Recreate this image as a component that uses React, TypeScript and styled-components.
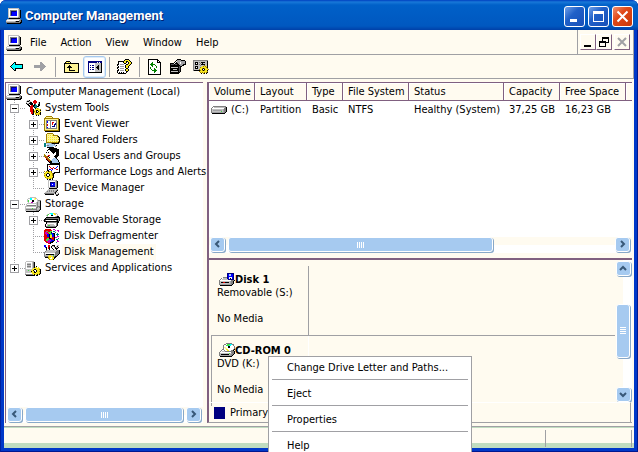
import React from "react";
import styled, { createGlobalStyle, css } from "styled-components";

const color = {
  cream: "#fffbf0",
  grey: "#a0a0a4",
  plum: "#806080",
  sky: "#a6caf0",
  mint: "#c0dcc0",
  frame: "#0038c8",
};

const GlobalStyle = createGlobalStyle`
  * { box-sizing: border-box; }
  body {
    margin: 0;
    overflow: hidden;
    font: 11px/16px "DejaVu Sans Condensed", "Liberation Sans", sans-serif;
    color: #000;
  }
  button { font: inherit; color: inherit; padding: 0; border: 0; background: none; }
  ul { list-style: none; margin: 0; padding: 0; }
`;

/* ---------- icons ---------- */

const palette: Record<string, string> = {
  k: "#000000", w: "#ffffff", g: "#808080", l: "#c0c0c0", b: "#0000ff",
  n: "#000080", y: "#f8e820", p: "#fff494", c: "#00ffff", t: "#008080",
  r: "#e00000", G: "#008000", o: "#a08000", m: "#c000c0", s: "#a6caf0",
  a: "#a0a0a4", d: "#505058", e: "#40e040",
};

const art = {
  computer: [
    "..lllllllllll...",
    "..lwwwwwwwwwlg..",
    "..lwgggggggwlgk.",
    "..lwgnnnnnbwlgk.",
    "..lwgnbbbbbwlgk.",
    "..lwgnbbbbbwlgk.",
    "..lwgnbbbbbwlgk.",
    "..lwgbbbbbbwlgk.",
    "..lwwwwwwwwwlgk.",
    "..llllllllllggk.",
    "...kkkkkkkkkkk..",
    ".lllllllllllllg.",
    "lwwwwwwwwwwwwggk",
    "lllllllllgkkkggk",
    "ggggggggggggggkk",
    ".kkkkkkkkkkkkkk.",
  ],
  back: [
    "....kk........",
    "...kck........",
    "..kcckkkkkkkk.",
    ".kcccccccccck.",
    "kccccccccccck.",
    ".kcccccccccck.",
    "..kcckkkkkkkk.",
    "...kck........",
    "....kk........",
  ],
  forward: [
    ".......aa.....",
    ".......aaa....",
    ".......aaaa...",
    ".aaaaaaaaaaa..",
    ".aaaaaaaaaaaa.",
    ".aaaaaaaaaaa..",
    ".......aaaa...",
    ".......aaa....",
    ".......aa.....",
  ],
  upFolder: [
    "..kkkk..........",
    ".kypypk.........",
    "kkkkkkkkkkkkkkk.",
    "kpppppppppppppk.",
    "kppppkppppppppk.",
    "kpppkkkpppppppk.",
    "kppkkkkkppppppk.",
    "kppppkppppppppk.",
    "kppppkppppppppk.",
    "kppppkkkkkkpppk.",
    "kpppppppppppppk.",
    "kkkkkkkkkkkkkkk.",
  ],
  treeToggle: [
    "nnnnnnnnnnnnnn",
    "nnnnnnnnnwnwnn",
    "nwwwwwwllllllk",
    "nwwwwwwllllllk",
    "nwnwnnwlllkllk",
    "nwwwwwwllkkllk",
    "nwnwnnwlkkkllk",
    "nwwwwwwllkkllk",
    "nwnwnnwlllkllk",
    "nwwwwwwllllllk",
    "nwwwwwwllllllk",
    "nkkkkkkkkkkkkk",
  ],
  helpDoc: [
    "........kkkk....",
    ".......kyyyyk...",
    ".kkkkkkyykkyyk..",
    ".kwwwwkyyk.kyyk.",
    ".kwwwwwkk..kyyk.",
    "kkwaaaawwkkyyk..",
    "kwwwwwwwkyyyk...",
    ".kwaaaawkyyk....",
    "kkwwwwwwkyyk....",
    "kwwaaaawwkk.....",
    ".kwwwwwwkyyk....",
    "kkwaaaawkyyk....",
    "kwwwwwwwwkk.....",
    "kwkwkwkwwk......",
    ".kkkkkkkk.......",
  ],
  refresh: [
    "kkkkkkkkkk...",
    "kwwwwwwwwkk..",
    "kwwwwwwwwkwk.",
    "kwwwGwwwwkkkk",
    "kwwGGwwwwwwwk",
    "kwGGGGGwwwwwk",
    "kwwGGwwGwwwwk",
    "kwwwGwwwGwwwk",
    "kwGwwwwwGwwwk",
    "kwGwwwGwwwwwk",
    "kwwGwwGGwwwwk",
    "kwwwGGGGGwwwk",
    "kwwwwwGGwwwwk",
    "kwwwwwGwwwwwk",
    "kwwwwwwwwwwwk",
    "kkkkkkkkkkkkk",
  ],
  properties: [
    ".......kkkk.....",
    "......kaaaakkkk.",
    ".....kwaaaaaaaak",
    "....kwkaaawaaaak",
    "kkkkwkkkaawaaaak",
    "kdddkddkkaaaakkk",
    "kkkkkkkkkkaakk..",
    "kkkkkkkkkdkk....",
    "klllllllkdk.....",
    "kkkkkkkkkdk.....",
    "kkkllllkkdk.....",
    "kkkkkkkkkdk.....",
    "klllllllkdk.....",
    "kkkkkkkkkk......",
    "kkkkkkkkk.......",
  ],
  settings: [
    "ggggggggggggggg.",
    "glllllllllllllk.",
    "glkkklglkkkkllk.",
    "glkwkllglkllllk.",
    "glkkklglkkkkllk.",
    "gllllllglllollk.",
    "glkkkllllyoyoyk.",
    "glkwklloyyyyyok.",
    "glkkkllyyokoyyo.",
    "gllllloyykwkyyyo",
    "gkkkkkkoyokoyyk.",
    "......oyyyyyyyo.",
    ".......oyoyoyok.",
    "........k.ok.k..",
  ],
  tools: [
    "..llk....rr.....",
    ".lkkll..rrrr....",
    ".l..lkk.rrrr.lk.",
    ".kllkkkk.rr..lk.",
    "..kk.kkk.kt..kk.",
    "...kk.rrkktt.kk.",
    "....krrrktttkk..",
    ".....rrrwktt....",
    ".....rrrwwkyoy..",
    ".....rrrkwyyyyyo",
    ".....rrrkyykkyyk",
    ".....rrrkoykwkyy",
    "......rrkyykkyyk",
    "......rrk.oyyyok",
    ".......kk.yoyoyk",
    "...........k.k..",
  ],
  eventViewer: [
    "..oooooo........",
    ".oppppppo.......",
    "ooooooooooooooo.",
    "opppppppppppppok",
    "opgggggggggggpok",
    "opgbwwgwwwwwgpok",
    "opgbwwgwrrwwgpok",
    "opgwwwgwrwwngpok",
    "opgrwwgwrwnngpok",
    "opgrwwgwwwnwgpok",
    "opgwwwgwnnnwgpok",
    "opgbwwgwwwwwgpok",
    "opgggggggggggpok",
    "opppppppppppppok",
    "oooooooooooooook",
    ".kkkkkkkkkkkkkkk",
  ],
  sharedFolder: [
    "...oooooo.......",
    "..oppppppo......",
    "..opypypyooooo..",
    "..oppppppppppok.",
    "..opypypypypypok",
    "..oppppppppppppk",
    "..opypypypypypok",
    "..oppppppppppppk",
    "..opypypypypypok",
    "..ooooooooooooko",
    "ttlssssgkkkkkkk.",
    "ttwsssssssg.....",
    "ttlggsssssssk...",
    "ttwsssssswwg....",
    "...kkkkkkk......",
  ],
  users: [
    ".....kkkkkkkk...",
    "....kkkkkkkkkkk.",
    "...kwwkkkkkkkkk.",
    "...wwwwkkkkkkkk.",
    "..kwkwwwkkkwkkk.",
    "...wwwwwwkwwkkk.",
    "o..wwwwwwwwwkkk.",
    "oo.wrrwwwwwkkkk.",
    "ooorkwwwwwkkkk..",
    ".roo.kwwwwwkk...",
    "..roowwwwsssk...",
    "..kroowwsssssk..",
    "...kroosssssssk.",
    "....krkkssssssk.",
    ".....kkksssssssk",
    "......kkkkkkkkkk",
  ],
  performance: [
    "...kkkkkkkkkkkkk",
    "...kwwwwwwwwwwwk",
    "...kwrwwwwwwwbwk",
    "...kwwrwwrwwbwwk",
    "...kwwwrrwrbwwwk",
    "...kwbbwbwwwrrwk",
    "...kkwwbwwwwwwwk",
    "o.oykoyowwwwwwwk",
    ".yyyyyyowwkkkkkk",
    "oyykkyyyokk.....",
    "yykwwkyyok......",
    "oykwwkyyok......",
    "yyykkyyyyk......",
    ".oyyyyyyok......",
    "..yoyyoyk.......",
    "...k.kk.k.......",
  ],
  device: [
    "....llllllllg...",
    "....lwwwwwwlgk..",
    "....lwnnnnnlgk..",
    "....lwnbbbblgk..",
    "....lwnbwbblgk..",
    "....lwnbbbblgk..",
    "....lwnnnnnlgk..",
    "....llllllllgk..",
    ".....kkkkkkkk...",
    "...wlllllllllg..",
    "..wllglglgllgk..",
    ".wlglglglglgk...",
    "wlllllllllgkll..",
    "gggggggggglkwwg.",
    ".kkkkkkkkk.lggk.",
    "............kk..",
  ],
  storage: [
    ".....llllll.....",
    "...llccwwpyl....",
    "..lwwccwwppwl...",
    "..lewwwkkwwwlggg",
    "..lewwwkkwwwlllk",
    "...lwwmmwwwlgllk",
    "..llllllllllgllk",
    ".lwwwwwwwwwlgllk",
    ".lggggggggglgllk",
    "llllllllllllgggk",
    "lwwwwwwwwwwgglgk",
    "lllllllelllglllk",
    "lgggggggggggllgk",
    "lllllllllllgggk.",
    ".kkkkkkkkkkkkk..",
  ],
  removable: [
    ".....lcccyyll...",
    "...lewwccwyywl..",
    "..lewwwkkwwwwl..",
    "...lwwwwwwwlgkk.",
    "..kkkkkkkkkkkkkk",
    ".kgggggggggggggk",
    "kkkkkkkkkkkkkkgk",
    "kgwwwwwwwwwwgkgk",
    "kkkkkkkkkkkkkkk.",
    "..kggggggggggkk.",
    "..kwwwwwwwwwgk..",
    ".kwlllllllwwgk..",
    ".kwleelllllwgk..",
    ".kggggggggggk...",
    "..kkkkkkkkkk....",
  ],
  defrag: [
    ".rrrrrr..mm.....",
    "rrrrrrrr...m.mm.",
    "rrggrree.tt...m.",
    "rmmreeek...t....",
    "rmmmreebbkk..t..",
    "rrmbbkeebbk.ttt.",
    "rrrbbkyybbk..t..",
    "rrrbbkyybbk..mm.",
    "rrrrrkyyrrkmm...",
    "rrreekkrrrk...t.",
    "rreeembbrrk.tt..",
    "rreemmmbbbk..m..",
    ".rrmmmbbkk...mm.",
    "..rrmmkkk...t...",
    "....rrk.........",
  ],
  diskManage: [
    "bb..rr..kkk..ll.",
    "bb..rr.kllk.lk..",
    ".bk.rk.k..lkllk.",
    "..k.rk..k..kkk..",
    "..k..k...k..k...",
    "..gllllllllllggk",
    ".gllllllllllgggk",
    "gllllllllllggggk",
    "gwwwwwwwwwwggggk",
    "glkkkkkkkklgggk.",
    "gllllyyllelggk..",
    "ggggyyyyyggkk...",
    ".kkkoyywyykk....",
    "....oywwyyk.....",
    ".....oyyyk......",
  ],
  services: [
    ".llllllll.......",
    "lwwwwwwlgk......",
    "lwllllwlgk......",
    "lwggggwlgk......",
    "lwllllwlgk......",
    "lwggggwlgk.k....",
    "lwllllwlgkyy.y..",
    "lwwwwwwlyyyyyyy.",
    "lllllllyykkyyyok",
    "lllellyykwwkyyyk",
    "llllllkyykwkyyok",
    "llllllyyykkyyyyk",
    "lwwwwwwyyyyyyyok",
    "ggggggggykyykyk.",
    ".kkkkkkkkk.kk...",
  ],
  volume: [
    "..ggggggggggggg.",
    ".gwlllllllllllgk",
    "gwwwwwwwwwwwwggk",
    "glllllllllllaggk",
    "glaaaaaaaaalaggk",
    "glllllllllelaggk",
    "gaaaaaaaaaaaagk.",
    ".kkkkkkkkkkkkk..",
  ],
  removableDisk: [
    "........nnnnnnn.",
    "........nbssbbn.",
    "........nbssbbn.",
    "........nbbbbbn.",
    "....ggggnbwwwbn.",
    "..gwllllnbwkwbn.",
    ".gwllllllnnnnnn.",
    "gwwwwwwwwwwwgggk",
    "gllllllllllaggk.",
    "glkkrrkkkklaggk.",
    "gllllllllllaggk.",
    "gaaaaaaaaaaagk..",
    ".kkkkkkkkkkkk...",
  ],
  cdrom: [
    ".......gggggg...",
    ".....ggweeeccgg.",
    "....gwweeeccwwg.",
    "....gwwwwkkwwwwg",
    "....gppwwkkwwwwg",
    "....gwppwwwwwwwg",
    "...ggwwyywwwwwgk",
    "..gwwgwwyywwggk.",
    ".gwlllgggggggggk",
    "gwwwwwwwwwwwgggk",
    "glllllllllelaggk",
    "glkkkkkkkklaggk.",
    "gaaaaaaaaaaagk..",
    ".kkkkkkkkkkkk...",
  ],
};

type ArtName = keyof typeof art;

function PixelIcon({ name }: { name: ArtName }) {
  const rows = art[name];
  const width = rows[0].length;
  const paths: Record<string, string> = {};
  rows.forEach((row, y) => {
    for (const match of row.matchAll(/([a-zA-Z])\1*/g)) {
      const key = match[1];
      paths[key] = (paths[key] ?? "") + `M${match.index} ${y}h${match[0].length}v1h-${match[0].length}z`;
    }
  });
  return (
    <IconSvg width={width} height={rows.length} viewBox={`0 0 ${width} ${rows.length}`} aria-hidden="true">
      {Object.entries(paths).map(([key, d]) => (
        <path key={key} d={d} fill={palette[key]} />
      ))}
    </IconSvg>
  );
}

const IconSvg = styled.svg`
  display: block;
  flex: none;
  shape-rendering: crispEdges;
`;

/* ---------- window frame ---------- */

const Window = styled.div`
  position: relative;
  display: flex;
  flex-direction: column;
  height: 100vh;
  overflow: hidden;
  background: ${color.frame};
  padding: 0 4px 4px;
  border-radius: 6px 6px 0 0;
  box-shadow: inset 1px 0 #0020a0, inset -1px -1px #001890;
`;

const TitleBar = styled.header`
  display: flex;
  align-items: center;
  gap: 3px;
  height: 30px;
  flex: none;
  margin: 0 -4px;
  padding: 2px 5px 0 6px;
  border-radius: 6px 6px 0 0;
  background: linear-gradient(#0040c0 0, #1878d8 2px, #0060c8 5px, #0058c0 26px, #0040a8 30px);
`;

const Title = styled.h1`
  flex: 1;
  margin: 0;
  font: bold 13px/18px Roboto, sans-serif;
  color: #fff;
  text-shadow: 1px 1px #002070;
`;

const CaptionButton = styled.button<{ $close?: boolean }>`
  width: 21px;
  height: 21px;
  display: grid;
  place-items: center;
  border: 1px solid #fff;
  border-radius: 3px;
  background: ${(p) =>
    p.$close
      ? "linear-gradient(135deg, #f09070, #e04818 40%, #c83808)"
      : "linear-gradient(135deg, #70a0e8, #2060c8 40%, #1850b8)"};
`;

const Client = styled.div`
  flex: 1;
  min-height: 0;
  display: flex;
  flex-direction: column;
  background: ${color.cream};
`;

const MenuRow = styled.div`
  display: flex;
  flex: none;
  height: 25px;
  border-bottom: 1px solid ${color.grey};
  border-right: 1px solid ${color.grey};
`;

const MenuBar = styled.nav`
  flex: 1;
  display: flex;
  align-items: center;
  padding: 2px 0 0 2px;
`;

const MenuButton = styled.button`
  padding: 0 7px;
  height: 20px;
  &:first-of-type { margin-left: 1px; }
`;

const MdiButtons = styled.div`
  display: flex;
  align-items: center;
  padding: 0 3px 0 2px;
  border-left: 1px solid ${color.grey};
`;

const MdiButton = styled.button<{ $apart?: boolean }>`
  width: 16px;
  height: 16px;
  display: grid;
  place-items: center;
  border: 1px solid;
  border-color: #fff ${color.plum} ${color.plum} #fff;
  margin-left: ${(p) => (p.$apart ? "2px" : "0")};
`;

const ToolBar = styled.div`
  display: flex;
  flex: none;
  align-items: center;
  height: 24px;
  padding-left: 1px;
  border-bottom: 1px solid ${color.grey};
  border-right: 1px solid ${color.grey};
`;

const ToolButton = styled.button<{ $pressed?: boolean }>`
  display: grid;
  place-items: center;
  width: 23px;
  height: 22px;
  ${(p) =>
    p.$pressed &&
    css`
      border: 1px solid ${color.sky};
      border-radius: 3px;
      background: #fff;
      box-shadow: inset 0 0 0 1px #e0ecf8;
    `}
`;

const Divider = styled.span<{ $tight?: boolean }>`
  width: 1px;
  height: 20px;
  margin: 0 ${(p) => (p.$tight ? "3px" : "4px")};
  background: ${color.grey};
`;

const Workspace = styled.main`
  flex: 1;
  min-height: 0;
  display: grid;
  grid-template-columns: 198px minmax(0, 1fr);
  gap: 4px;
  padding: 3px 2px 3px 1px;
`;

/* ---------- scroll bars ---------- */

const skyBlock = css`
  background: ${color.sky};
  border: 1px solid #fff;
  border-radius: 3px;
  box-shadow: 1px 1px #88a8c8;
`;

const HBar = styled.div`
  display: flex;
  flex: none;
  height: 16px;
  gap: 3px;
  padding: 0 2px 1px 1px;
  background: linear-gradient(${color.cream} 50%, #fff 50%);
`;

const VBar = styled.div`
  display: flex;
  flex-direction: column;
  width: 17px;
  padding: 1px 2px 0 1px;
  background: linear-gradient(90deg, ${color.cream} 50%, #fff 50%);
`;

const ArrowButton = styled.button`
  ${skyBlock}
  flex: none;
  width: 15px;
  height: 15px;
  display: grid;
  place-items: center;
`;

const HTrack = styled.div<{ $size: string }>`
  flex: 1;
  display: grid;
  grid-template-columns: ${(p) => p.$size};
`;

const VTrack = styled.div`
  flex: 1;
  display: grid;
  grid-template-rows: 28fr 53fr 29fr;
`;

const Thumb = styled.div<{ $vertical?: boolean }>`
  ${skyBlock}
  ${(p) => p.$vertical && "grid-row: 2;"}
  display: grid;
  place-items: center;
`;

const Grip = styled.span<{ $vertical?: boolean }>`
  width: ${(p) => (p.$vertical ? "6px" : "7px")};
  height: ${(p) => (p.$vertical ? "7px" : "6px")};
  background: repeating-linear-gradient(${(p) => (p.$vertical ? "180deg" : "90deg")}, #fff 0 1px, transparent 1px 2px);
`;

const arrows = {
  left: "M6 1L3 4L6 7",
  right: "M3 1L6 4L3 7",
  up: "M1 6L4 3L7 6",
  down: "M1 3L4 6L7 3",
};

function Arrow({ to }: { to: keyof typeof arrows }) {
  return (
    <ArrowButton aria-label={`Scroll ${to}`}>
      <svg width="9" height="9" viewBox="0 0 9 9">
        <path d={arrows[to]} fill="none" stroke="#385878" strokeWidth="2" />
      </svg>
    </ArrowButton>
  );
}

function HorizontalScroll({ size }: { size: string }) {
  return (
    <HBar>
      <Arrow to="left" />
      <HTrack $size={size}>
        <Thumb><Grip /></Thumb>
      </HTrack>
      <Arrow to="right" />
    </HBar>
  );
}

/* ---------- console tree ---------- */

const TreePane = styled.section`
  display: flex;
  flex-direction: column;
  min-height: 0;
  background: #fff;
  border-top: 1px solid ${color.plum};
  border-left: 1px solid ${color.plum};
`;

const TreeList = styled.ul`
  flex: 1;
  min-height: 0;
  padding-top: 1px;
`;

const TreeItem = styled.li`
  display: flex;
  align-items: center;
  height: 16px;
`;

const TreeLabel = styled.span<{ $selected?: boolean }>`
  margin-left: 2px;
  padding: 0 2px;
  white-space: nowrap;
  background: ${(p) => (p.$selected ? color.cream : "transparent")};
`;

const GuideSvg = styled.svg`
  flex: none;
  display: block;
  shape-rendering: crispEdges;
`;

type GuideKind = "plus" | "minus" | "tee" | "elbow" | "line" | "plusEnd";

function Guide({ kind }: { kind: GuideKind }) {
  const boxed = kind === "plus" || kind === "minus" || kind === "plusEnd";
  const ends = kind === "elbow" || kind === "plusEnd";
  return (
    <GuideSvg width="19" height="16" viewBox="0 0 19 16">
      <path d={`M8.5 0V${ends ? 8 : 16}`} stroke={color.grey} strokeDasharray="1 1" />
      {kind !== "line" && <path d="M8 8.5H19" stroke={color.grey} strokeDasharray="1 1" />}
      {boxed && <rect x="4.5" y="4.5" width="8" height="8" fill="#fff" stroke={color.grey} />}
      {boxed && <path d={`M6 8.5H11${kind === "minus" ? "" : "M8.5 6V11"}`} stroke="#000" />}
    </GuideSvg>
  );
}

const tree: { label: string; icon: ArtName; guides: GuideKind[]; selected?: boolean }[] = [
  { label: "Computer Management (Local)", icon: "computer", guides: [] },
  { label: "System Tools", icon: "tools", guides: ["minus"] },
  { label: "Event Viewer", icon: "eventViewer", guides: ["line", "plus"] },
  { label: "Shared Folders", icon: "sharedFolder", guides: ["line", "plus"] },
  { label: "Local Users and Groups", icon: "users", guides: ["line", "plus"] },
  { label: "Performance Logs and Alerts", icon: "performance", guides: ["line", "plus"] },
  { label: "Device Manager", icon: "device", guides: ["line", "elbow"] },
  { label: "Storage", icon: "storage", guides: ["minus"] },
  { label: "Removable Storage", icon: "removable", guides: ["line", "plus"] },
  { label: "Disk Defragmenter", icon: "defrag", guides: ["line", "tee"] },
  { label: "Disk Management", icon: "diskManage", guides: ["line", "elbow"], selected: true },
  { label: "Services and Applications", icon: "services", guides: ["plusEnd"] },
];

/* ---------- volumes and disks ---------- */

const Details = styled.section`
  display: flex;
  flex-direction: column;
  min-height: 0;
  border-top: 1px solid ${color.plum};
  border-left: 2px solid ${color.plum};
  border-bottom: 1px solid ${color.grey};
`;

const VolumePane = styled.div`
  display: flex;
  flex-direction: column;
  flex: none;
  height: 170px;
  background: #fff;
`;

const VolumeTable = styled.table`
  width: 100%;
  table-layout: fixed;
  border-collapse: separate;
  border-spacing: 0;
  margin-bottom: auto;
  th, td {
    padding: 0 0 0 5px;
    font-weight: normal;
    text-align: left;
    white-space: nowrap;
  }
  th {
    height: 18px;
    background: ${color.cream};
    border-right: 1px solid ${color.plum};
    border-bottom: 1px solid ${color.plum};
    box-shadow: inset 1px 1px #fff;
  }
  th:last-child { border-right: 0; }
  td { height: 18px; }
`;

const Col = styled.col<{ $w?: number }>`
  width: ${(p) => (p.$w ? `${p.$w}px` : "auto")};
`;

const VolumeName = styled.div`
  display: flex;
  align-items: center;
  gap: 4px;
  margin-left: -3px;
`;

const DiskPane = styled.div`
  flex: 1;
  min-height: 0;
  display: flex;
  flex-direction: column;
  margin-top: 5px;
  border-top: 2px solid ${color.plum};
`;

const DiskScroller = styled.div`
  flex: 1;
  min-height: 0;
  display: flex;
`;

const DiskList = styled.ul`
  flex: 1;
  padding: 6px 0 0 2px;
`;

const DiskRow = styled.li<{ $selected?: boolean }>`
  display: grid;
  grid-template-columns: 98px 1fr;
  height: 70px;
  border-bottom: ${(p) => (p.$selected ? "0" : `1px solid ${color.grey}`)};
`;

const DiskCard = styled.div<{ $selected?: boolean }>`
  padding: ${(p) => (p.$selected ? "5px 0 0 5px" : "4px 0 0 6px")};
  line-height: 13px;
  border-left: ${(p) => (p.$selected ? `1px solid ${color.grey}` : "0")};
  border-right: 1px solid ${(p) => (p.$selected ? "#fff" : color.grey)};
`;

const DiskName = styled.div`
  display: flex;
  align-items: flex-end;
  height: 16px;
  margin-left: 2px;
  font-weight: bold;
`;

const Legend = styled.div`
  flex: none;
  display: flex;
  align-items: center;
  gap: 5px;
  height: 20px;
  padding-left: 5px;
  margin-right: 1px;
  border-top: 1px solid #fff;
  border-right: 1px solid ${color.grey};
`;

const Swatch = styled.span`
  width: 11px;
  height: 12px;
  background: #000080;
`;

const StatusBar = styled.footer`
  flex: none;
  display: grid;
  grid-template-columns: minmax(0, 1fr) 86px 2px;
  height: 22px;
  border-top: 1px solid ${color.grey};
  box-shadow: inset 0 1px ${color.mint};
  background: linear-gradient(${color.cream} 16px, ${color.mint} 16px);
`;

const StatusCell = styled.div`
  margin: 3px 0 1px;
  border-right: 1px solid ${color.grey};
`;

/* ---------- shortcut menu ---------- */

const ContextMenu = styled.div`
  position: absolute;
  left: 268px;
  top: 356px;
  width: 204px;
  background: #fff;
  border: 1px solid ${color.grey};
`;

const ContextItem = styled.button`
  display: block;
  width: 100%;
  height: 21px;
  padding-left: 18px;
  text-align: left;
`;

const Separator = styled.hr`
  height: 1px;
  margin: 1px 3px 3px;
  border: 0;
  background: ${color.grey};
`;

const contextItems = ["Change Drive Letter and Paths...", "Eject", "Properties", "Help"];

function Tool({ icon, label, pressed }: { icon: ArtName; label: string; pressed?: boolean }) {
  return (
    <ToolButton aria-label={label} $pressed={pressed} aria-pressed={pressed}>
      <PixelIcon name={icon} />
    </ToolButton>
  );
}

export default function App() {
  return (
    <>
      <GlobalStyle />
      <Window>
        <TitleBar>
          <PixelIcon name="computer" />
          <Title>Computer Management</Title>
          <CaptionButton aria-label="Minimize">
            <svg width="13" height="13"><path d="M2 10.5H9" stroke="#fff" strokeWidth="3" /></svg>
          </CaptionButton>
          <CaptionButton aria-label="Maximize">
            <svg width="13" height="13" shapeRendering="crispEdges"><path d="M1 2.5H12M1.5 1V12M11.5 1V12M1 11.5H12" stroke="#fff" fill="none" /><path d="M1 1H12V4H1z" fill="#fff" /></svg>
          </CaptionButton>
          <CaptionButton aria-label="Close" $close>
            <svg width="13" height="13"><path d="M1.5 1.5L11.5 11.5M11.5 1.5L1.5 11.5" stroke="#fff" strokeWidth="2" /></svg>
          </CaptionButton>
        </TitleBar>
        <Client>
          <MenuRow>
            <MenuBar>
              <PixelIcon name="computer" />
              {["File", "Action", "View", "Window", "Help"].map((m) => (
                <MenuButton key={m}>{m}</MenuButton>
              ))}
            </MenuBar>
            <MdiButtons>
              <MdiButton aria-label="Minimize console">
                <svg width="10" height="10"><path d="M1 9H8" stroke="#000" strokeWidth="2" /></svg>
              </MdiButton>
              <MdiButton aria-label="Restore console">
                <svg width="10" height="10" shapeRendering="crispEdges">
                  <path d="M3 1H10M3.5 0V4M9.5 0V6M7 5.5H10M0 5H7M0.5 4V10M6.5 4V10M0 9.5H7" stroke="#000" fill="none" />
                  <path d="M3 0H10V2H3zM0 4H7V6H0z" />
                </svg>
              </MdiButton>
              <MdiButton aria-label="Close console" $apart>
                <svg width="10" height="10"><path d="M1 1L9 9M9 1L1 9" stroke={color.grey} strokeWidth="2" /></svg>
              </MdiButton>
            </MdiButtons>
          </MenuRow>
          <ToolBar>
            <Tool icon="back" label="Back" />
            <Tool icon="forward" label="Forward" />
            <Divider />
            <Tool icon="upFolder" label="Up one level" />
            <Tool icon="treeToggle" label="Show or hide console tree" pressed />
            <Divider $tight />
            <Tool icon="helpDoc" label="Help" />
            <Divider $tight />
            <Tool icon="refresh" label="Refresh" />
            <Tool icon="properties" label="Properties" />
            <Tool icon="settings" label="Settings" />
          </ToolBar>
          <Workspace>
            <TreePane>
              <TreeList>
                {tree.map((node) => (
                  <TreeItem key={node.label}>
                    {node.guides.map((kind, i) => (
                      <Guide key={i} kind={kind} />
                    ))}
                    <PixelIcon name={node.icon} />
                    <TreeLabel $selected={node.selected}>{node.label}</TreeLabel>
                  </TreeItem>
                ))}
              </TreeList>
              <HorizontalScroll size="minmax(0, 1fr)" />
            </TreePane>
            <Details>
              <VolumePane>
                <VolumeTable>
                  <colgroup>
                    {[46, 52, 36, 66, 95, 56, 66].map((w, i) => (
                      <Col key={i} $w={w} />
                    ))}
                    <Col />
                  </colgroup>
                  <thead>
                    <tr>
                      {["Volume", "Layout", "Type", "File System", "Status", "Capacity", "Free Space", ""].map((h) => (
                        <th key={h} scope="col">{h}</th>
                      ))}
                    </tr>
                  </thead>
                  <tbody>
                    <tr>
                      <td><VolumeName><PixelIcon name="volume" />(C:)</VolumeName></td>
                      <td>Partition</td>
                      <td>Basic</td>
                      <td>NTFS</td>
                      <td>Healthy (System)</td>
                      <td>37,25 GB</td>
                      <td>16,23 GB</td>
                      <td />
                    </tr>
                  </tbody>
                </VolumeTable>
                <HorizontalScroll size="69% 31%" />
              </VolumePane>
              <DiskPane>
                <DiskScroller>
                  <DiskList>
                    <DiskRow>
                      <DiskCard>
                        <DiskName><PixelIcon name="removableDisk" />Disk 1</DiskName>
                        <div>Removable (S:)</div>
                        <br />
                        <div>No Media</div>
                      </DiskCard>
                    </DiskRow>
                    <DiskRow $selected>
                      <DiskCard $selected>
                        <DiskName><PixelIcon name="cdrom" />CD-ROM 0</DiskName>
                        <div>DVD (K:)</div>
                        <br />
                        <div>No Media</div>
                      </DiskCard>
                    </DiskRow>
                  </DiskList>
                  <VBar>
                    <Arrow to="up" />
                    <VTrack>
                      <Thumb $vertical><Grip $vertical /></Thumb>
                    </VTrack>
                    <Arrow to="down" />
                  </VBar>
                </DiskScroller>
                <Legend><Swatch />Primary</Legend>
              </DiskPane>
            </Details>
          </Workspace>
          <StatusBar>
            <StatusCell />
            <StatusCell />
          </StatusBar>
        </Client>
        <ContextMenu role="menu">
          {contextItems.map((item, i) => (
            <React.Fragment key={item}>
              {i > 0 && <Separator />}
              <ContextItem role="menuitem">{item}</ContextItem>
            </React.Fragment>
          ))}
        </ContextMenu>
      </Window>
    </>
  );
}
